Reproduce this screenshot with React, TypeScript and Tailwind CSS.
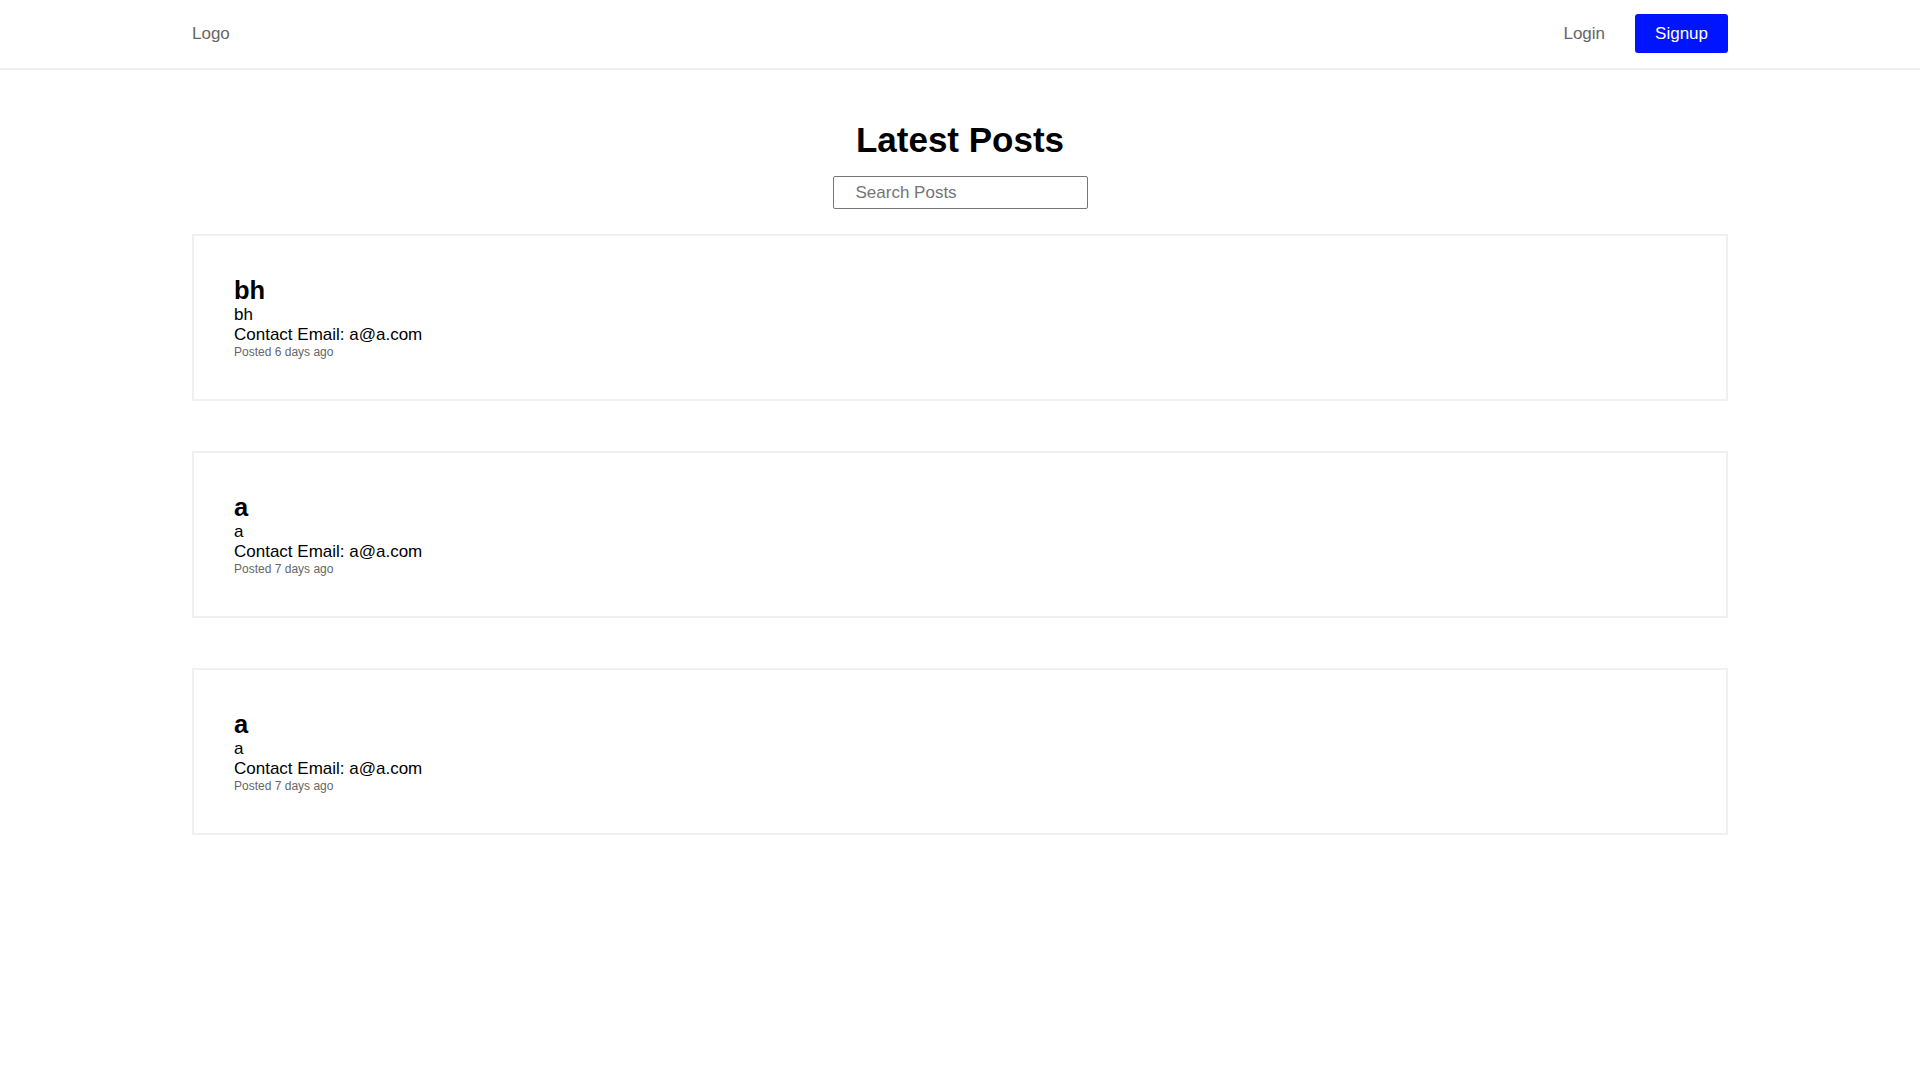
import React from "react";

type Post = {
  title: string;
  body: string;
  email: string;
  posted: string;
};

const posts: Post[] = [
  { title: "bh", body: "bh", email: "a@a.com", posted: "Posted 6 days ago" },
  { title: "a", body: "a", email: "a@a.com", posted: "Posted 7 days ago" },
  { title: "a", body: "a", email: "a@a.com", posted: "Posted 7 days ago" },
];

const PostCard = ({ post }: { post: Post }) => {
  return (
    <div className="border-2 border-[#f0f0f0] bg-white p-[40px]">
      <h2 className="text-[25.5px] font-bold leading-[29px] text-black">{post.title}</h2>
      <p className="text-[17px] leading-[19.5px] text-black">{post.body}</p>
      <p className="text-[17px] leading-[19.5px] text-black">Contact Email: {post.email}</p>
      <p className="pt-[1px] text-[12px] leading-[14px] text-[#666666]">{post.posted}</p>
    </div>
  );
};

export default function App() {
  return (
    <div className="min-h-screen bg-white font-['Liberation_Sans',Arial,sans-serif] text-[17px] text-black">
      {/* Navbar */}
      <header className="border-b-2 border-[#eeeeee]">
        <nav className="mx-auto flex h-[68px] max-w-[1536px] items-center justify-between">
          <a href="#" className="text-[#666666]">
            Logo
          </a>
          <div className="flex items-center gap-[30px]">
            <a href="#" className="text-[#666666]">
              Login
            </a>
            <button className="mb-[1px] h-[39px] rounded-[3px] bg-[#0014ff] px-[20px] text-white">
              Signup
            </button>
          </div>
        </nav>
      </header>

      {/* Posts */}
      <main className="mx-auto max-w-[1536px] pt-[50px]">
        <h1 className="text-center text-[35px] font-bold leading-[40px]">Latest Posts</h1>
        <div className="mt-[16px] flex justify-center">
          <input
            type="text"
            placeholder="Search Posts"
            className="h-[33px] w-[255px] rounded-[2px] border border-[#767676] px-[22px] text-[17px] outline-none placeholder:text-[#757575]"
          />
        </div>
        <div className="mt-[25px] flex flex-col gap-[50px]">
          {posts.map((post, idx) => (
            <PostCard key={idx} post={post} />
          ))}
        </div>
      </main>
    </div>
  );
}
